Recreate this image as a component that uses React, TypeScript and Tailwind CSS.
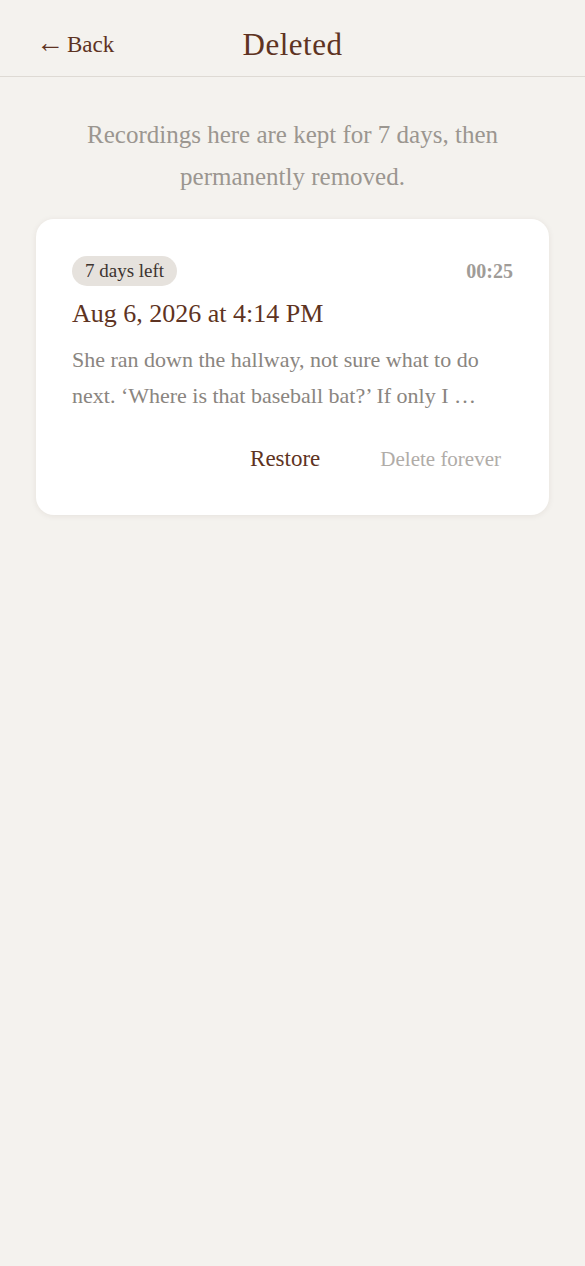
const serif = { fontFamily: '"Liberation Serif", "DejaVu Serif", serif' };

function Header() {
  return (
    <header className="grid h-[77px] grid-cols-[1fr_auto_1fr] items-center border-b border-[#dedad4] px-9 pt-[15px]">
      <button type="button" className="flex items-center gap-[3px] justify-self-start text-[23px] text-[#5e3322]">
        <span className="relative -top-[3px] text-[28px] leading-none">←</span>
        <span>Back</span>
      </button>
      <h1 className="text-[31px] tracking-[0.5px] text-[#5e3322]">Deleted</h1>
      <div />
    </header>
  );
}

function DeletedCard() {
  return (
    <div className="rounded-[18px] bg-white px-9 pt-[37px] pb-[38px] shadow-[0_1px_6px_rgba(60,40,20,0.08)]">
      <div className="flex items-center justify-between">
        <span className="rounded-full bg-[#e6e2dd] px-[13px] py-[3px] text-[19px] leading-[24px] text-[#3d3430]">7 days left</span>
        <span className="text-[20px] font-bold text-[#a09c98]">00:25</span>
      </div>
      <div className="mt-[10px] text-[26px] leading-[36px] text-[#5e3322]">Aug 6, 2026 at 4:14 PM</div>
      <p className="mt-[10px] pr-[12px] text-[22px] leading-[36px] text-[#8a8580]">
        She ran down the hallway, not sure what to do next. ‘Where is that baseball bat?’ If only I …
      </p>
      <div className="mt-[28px] flex justify-end gap-[60px] pr-3">
        <button type="button" className="text-[23px] text-[#5e3322]">Restore</button>
        <button type="button" className="text-[21px] text-[#b0aca8]">Delete forever</button>
      </div>
    </div>
  );
}

export default function App() {
  return (
    <div className="min-h-[1266px] bg-[#f4f2ee]" style={serif}>
      <Header />
      <main className="px-9">
        <p className="mx-auto mt-[37px] max-w-[440px] text-center text-[25px] leading-[42px] text-[#9b9690]">
          Recordings here are kept for 7 days, then permanently removed.
        </p>
        <div className="mt-[21px]">
          <DeletedCard />
        </div>
      </main>
    </div>
  );
}
